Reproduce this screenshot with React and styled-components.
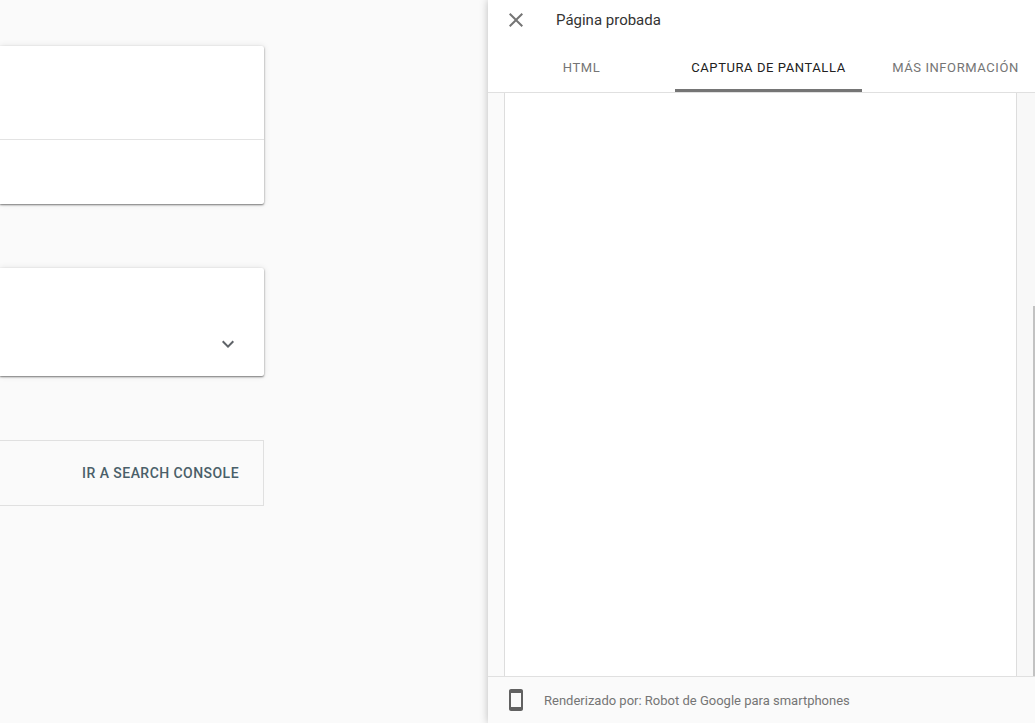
import React from 'react';
import styled, { createGlobalStyle } from 'styled-components';

const Global = createGlobalStyle`
  html, body { margin: 0; padding: 0; height: 100%; overflow: hidden; }
  body { background: #fafafa; font-family: Roboto, "Liberation Sans", sans-serif; }
  #root { height: 100%; }
`;

const Page = styled.div`
  display: flex;
  width: 1035px;
  height: 723px;
  overflow: hidden;
  background: #fafafa;
`;

const Main = styled.main`
  width: 264px;
  flex: none;
  display: flex;
  flex-direction: column;
  padding-top: 46px;
  margin-right: 224px;
`;

const Card = styled.section`
  background: #fff;
  height: ${p => p.$height}px;
  margin-bottom: ${p => p.$gap}px;
  border-radius: 0 2px 2px 0;
  box-shadow: 0 1px 2px rgba(0, 0, 0, 0.5), 0 0 6px rgba(0, 0, 0, 0.1);
  display: flex;
  flex-direction: column;
`;

const CardTop = styled.div`
  height: 93px;
  border-bottom: 1px solid #e3e3e3;
`;

const ExpandRow = styled.div`
  margin-top: auto;
  height: 64px;
  display: flex;
  align-items: center;
  justify-content: flex-end;
  padding-right: 24px;
`;

const Action = styled.div`
  border: 1px solid #e0e0e0;
  border-left: none;
  display: flex;
  align-items: center;
  justify-content: flex-end;
  padding-right: 24px;
  padding-bottom: 1px;
  height: 63px;
  font-size: 14px;
  font-weight: 500;
  letter-spacing: 0.45px;
  color: #4a5f69;
`;

const Panel = styled.aside`
  width: 547px;
  flex: none;
  height: 723px;
  display: flex;
  flex-direction: column;
  background: #fff;
  overflow: hidden;
  box-shadow: 0 0 8px rgba(0, 0, 0, 0.25);
  position: relative;
`;

const Header = styled.header`
  height: 40px;
  display: flex;
  align-items: center;
  padding-left: 16px;
  flex: none;
`;

const Icon = styled.svg`
  width: 24px;
  height: 24px;
  flex: none;
  display: block;
  fill: ${p => p.$color};
  margin-right: ${p => p.$gap || 0}px;
`;

const Title = styled.h1`
  margin: 0;
  font-size: 15px;
  font-weight: 400;
  color: #333;
`;

const Tabs = styled.nav`
  height: 53px;
  flex: none;
  display: flex;
  align-items: stretch;
  box-sizing: border-box;
  border-bottom: 1px solid #e0e0e0;
`;

const Tab = styled.div`
  flex: 0 0 187px;
  box-sizing: border-box;
  display: flex;
  align-items: center;
  justify-content: center;
  padding-top: 5px;
  height: 52px;
  font-size: 13px;
  font-weight: 400;
  letter-spacing: 0.58px;
  white-space: nowrap;
  color: ${p => (p.$active ? '#212121' : '#757575')};
  border-bottom: 3px solid ${p => (p.$active ? '#757575' : 'transparent')};
`;

const Viewer = styled.div`
  flex: 1;
  min-height: 0;
  display: flex;
  background: #fafafa;
`;

const Gutter = styled.div`
  width: 16px;
  flex: none;
  background: #fafafa;
`;

const Shot = styled.div`
  flex: 1;
  background: #fff;
  border-left: 1px solid #ddd;
  border-right: 1px solid #ddd;
`;

const ScrollTrack = styled.div`
  width: 18px;
  flex: none;
  background: #f8f8f8;
  display: flex;
  justify-content: flex-end;
  padding-top: 213px;
`;

const ScrollThumb = styled.div`
  width: 2px;
  height: 370px;
  background: #c2c2c2;
`;

const Footer = styled.footer`
  height: 46px;
  flex: none;
  border-top: 1px solid #e0e0e0;
  background: #fafafa;
  display: flex;
  align-items: center;
  padding-left: 16px;
`;

const FooterText = styled.span`
  font-size: 13px;
  color: #757575;
`;

export default function App() {
  return (
    <Page>
      <Global />
      <Main>
        <Card $height={158} $gap={64}>
          <CardTop />
        </Card>
        <Card $height={108} $gap={64}>
          <ExpandRow>
            <Icon viewBox="0 0 24 24" $color="#5f6368">
              <path d="M16.59 8.59L12 13.17 7.41 8.59 6 10l6 6 6-6z" />
            </Icon>
          </ExpandRow>
        </Card>
        <Action>IR A SEARCH CONSOLE</Action>
      </Main>
      <Panel>
        <Header>
          <Icon viewBox="0 0 24 24" $color="#757575" $gap={28}>
            <path d="M19 6.41L17.59 5 12 10.59 6.41 5 5 6.41 10.59 12 5 17.59 6.41 19 12 13.41 17.59 19 19 17.59 13.41 12z" />
          </Icon>
          <Title>Página probada</Title>
        </Header>
        <Tabs>
          <Tab>HTML</Tab>
          <Tab $active>CAPTURA DE PANTALLA</Tab>
          <Tab>MÁS INFORMACIÓN</Tab>
        </Tabs>
        <Viewer>
          <Gutter />
          <Shot />
          <ScrollTrack>
            <ScrollThumb />
          </ScrollTrack>
        </Viewer>
        <Footer>
          <Icon viewBox="0 0 24 24" $color="#616161" $gap={16}>
            <path d="M17 1.01L7 1c-1.1 0-2 .9-2 2v18c0 1.1.9 2 2 2h10c1.1 0 2-.9 2-2V3c0-1.1-.9-1.99-2-1.99zM17 19H7V5h10v14z" />
          </Icon>
          <FooterText>Renderizado por: Robot de Google para smartphones</FooterText>
        </Footer>
      </Panel>
    </Page>
  );
}
